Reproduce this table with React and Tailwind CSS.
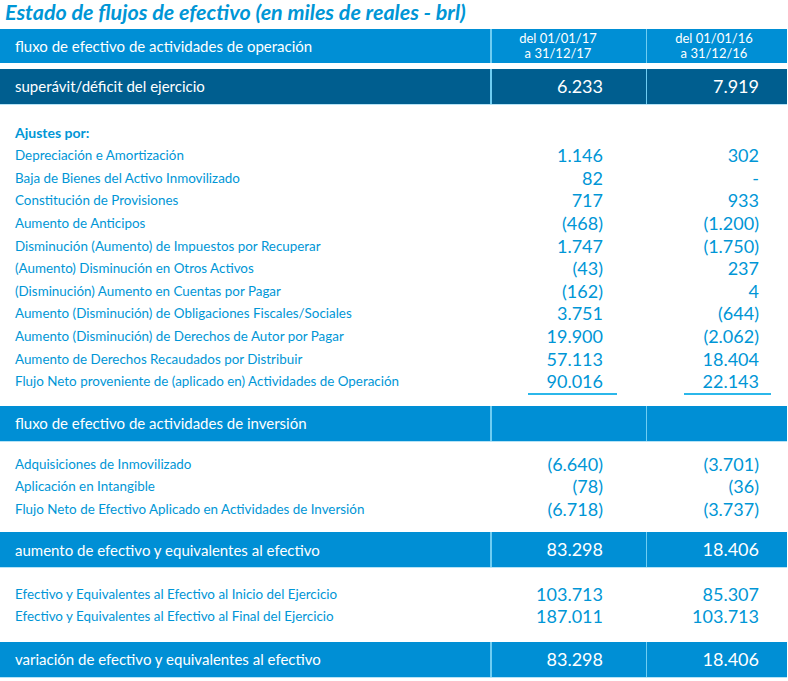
const ajustes = [
  ['Depreciación e Amortización', '1.146', '302'],
  ['Baja de Bienes del Activo Inmovilizado', '82', '-'],
  ['Constitución de Provisiones', '717', '933'],
  ['Aumento de Anticipos', '(468)', '(1.200)'],
  ['Disminución (Aumento) de Impuestos por Recuperar', '1.747', '(1.750)'],
  ['(Aumento) Disminución en Otros Activos', '(43)', '237'],
  ['(Disminución) Aumento en Cuentas por Pagar', '(162)', '4'],
  ['Aumento (Disminución) de Obligaciones Fiscales/Sociales', '3.751', '(644)'],
  ['Aumento (Disminución) de Derechos de Autor por Pagar', '19.900', '(2.062)'],
  ['Aumento de Derechos Recaudados por Distribuir', '57.113', '18.404'],
  ['Flujo Neto proveniente de (aplicado en) Actividades de Operación', '90.016', '22.143'],
]

const inversion = [
  ['Adquisiciones de Inmovilizado', '(6.640)', '(3.701)'],
  ['Aplicación en Intangible', '(78)', '(36)'],
  ['Flujo Neto de Efectivo Aplicado en Actividades de Inversión', '(6.718)', '(3.737)'],
]

const saldos = [
  ['Efectivo y Equivalentes al Efectivo al Inicio del Ejercicio', '103.713', '85.307'],
  ['Efectivo y Equivalentes al Efectivo al Final del Ejercicio', '187.011', '103.713'],
]

const cols = 'grid grid-cols-[490px_156px_141px]'

const Bar = ({ label, a, b, dark }) => {
  const bg = dark ? 'bg-[#005e8f]' : 'bg-[#008fd5]'
  return (
    <div className={`${cols} h-[36px] border-b border-[#b6e3f6] text-white`}>
      <div className={`${bg} flex items-center pl-[15px] text-[15px]`}>{label}</div>
      <div className={`${bg} flex items-center justify-end border-l-2 border-[#6fcdf2] pr-[43px] text-[18px]`}>{a}</div>
      <div className={`${bg} flex items-center justify-end border-l border-[#6fcdf2] pr-[28px] text-[18px]`}>{b}</div>
    </div>
  )
}

const Row = ({ label, a, b }) => (
  <div className={`${cols} h-[22.6px] items-center text-[#0096d6]`}>
    <div className="pl-[15px] text-[13.4px]">{label}</div>
    <div className="pr-[43px] text-right text-[18px] leading-none">{a}</div>
    <div className="pr-[28px] text-right text-[18px] leading-none">{b}</div>
  </div>
)

export default function App() {
  return (
    <div className="w-[787px] bg-white font-['Lato',sans-serif]">
      <h1 className="h-[29px] pl-[5px] text-[21.5px] font-bold italic leading-[24px] text-[#0096d6]">
        Estado de flujos de efectivo (en miles de reales - brl)
      </h1>

      <div className={`${cols} h-[34px] text-white`}>
        <div className="flex items-center bg-[#008fd5] pl-[15px] text-[15px]">
          fluxo de efectivo de actividades de operación
        </div>
        <div className="flex flex-col items-center justify-center border-l-2 border-[#6fcdf2] bg-[#008fd5] pr-[22px] text-[13px] leading-[15px]">
          <span>del 01/01/17</span>
          <span>a 31/12/17</span>
        </div>
        <div className="flex flex-col items-center justify-center border-l border-[#6fcdf2] bg-[#008fd5] pr-[6px] text-[13px] leading-[15px]">
          <span>del 01/01/16</span>
          <span>a 31/12/16</span>
        </div>
      </div>

      <div className="mt-[6px]">
        <Bar label="superávit/déficit del ejercicio" a="6.233" b="7.919" dark />
      </div>

      <div className="pt-[15px]">
        <div className="flex h-[24px] items-center pl-[15px] text-[14px] font-bold text-[#0096d6]">Ajustes por:</div>
        {ajustes.map((r) => (
          <Row key={r[0]} label={r[0]} a={r[1]} b={r[2]} />
        ))}
        <div className={`${cols} h-[2px]`}>
          <div />
          <div className="ml-[38px] mr-[29px] bg-[#2bb7ea]" />
          <div className="ml-[38px] mr-[16px] bg-[#2bb7ea]" />
        </div>
      </div>

      <div className="mt-[11px]">
        <Bar label="fluxo de efectivo de actividades de inversión" />
      </div>

      <div className="pb-[12px] pt-[11px]">
        {inversion.map((r) => (
          <Row key={r[0]} label={r[0]} a={r[1]} b={r[2]} />
        ))}
      </div>

      <Bar label="aumento de efectivo y equivalentes al efectivo" a="83.298" b="18.406" />

      <div className="pb-[14px] pt-[14px]">
        {saldos.map((r) => (
          <Row key={r[0]} label={r[0]} a={r[1]} b={r[2]} />
        ))}
      </div>

      <Bar label="variación de efectivo y equivalentes al efectivo" a="83.298" b="18.406" />
    </div>
  )
}
